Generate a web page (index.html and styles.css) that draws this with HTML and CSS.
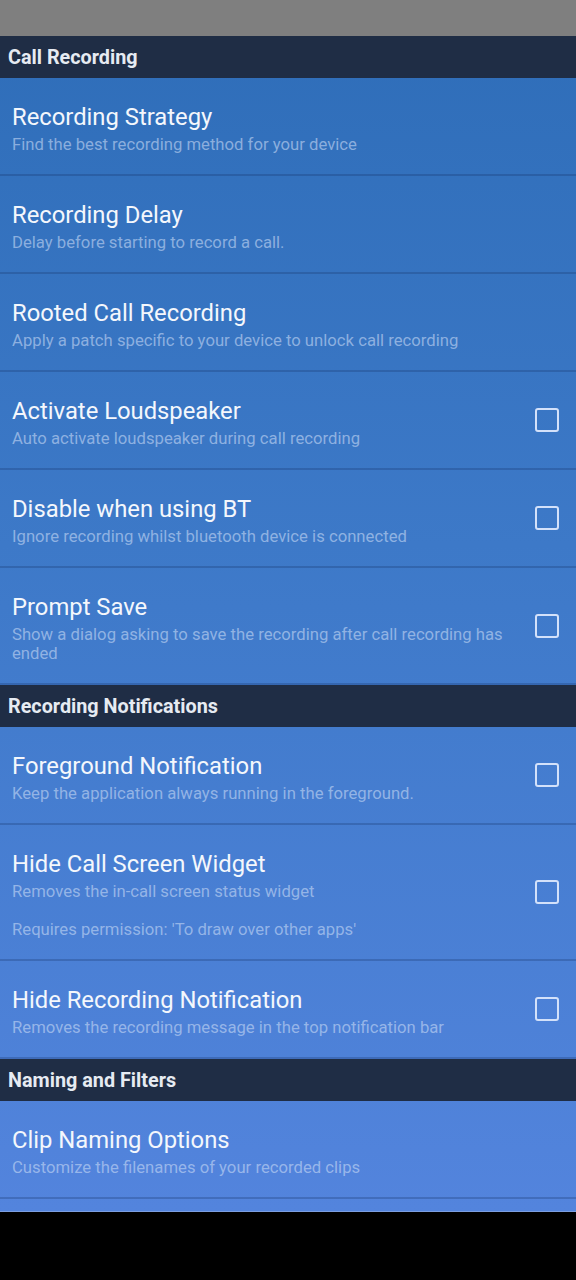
FILE: index.html
```html
<!DOCTYPE html>
<html>
<head>
<meta charset="utf-8">
<link rel="stylesheet" href="styles.css">
</head>
<body>
<div class="screen">
  <div class="statusbar"></div>
  <div class="list">
    <div class="section">Call Recording</div>
    <div class="item">
      <div class="text">
        <div class="title">Recording Strategy</div>
        <div class="sub">Find the best recording method for your device</div>
      </div>
    </div>
    <div class="item">
      <div class="text">
        <div class="title">Recording Delay</div>
        <div class="sub">Delay before starting to record a call.</div>
      </div>
    </div>
    <div class="item">
      <div class="text">
        <div class="title">Rooted Call Recording</div>
        <div class="sub">Apply a patch specific to your device to unlock call recording</div>
      </div>
    </div>
    <div class="item">
      <div class="text">
        <div class="title">Activate Loudspeaker</div>
        <div class="sub">Auto activate loudspeaker during call recording</div>
      </div>
      <div class="check"></div>
    </div>
    <div class="item">
      <div class="text">
        <div class="title">Disable when using BT</div>
        <div class="sub">Ignore recording whilst bluetooth device is connected</div>
      </div>
      <div class="check"></div>
    </div>
    <div class="item">
      <div class="text">
        <div class="title">Prompt Save</div>
        <div class="sub">Show a dialog asking to save the recording after call recording has ended</div>
      </div>
      <div class="check"></div>
    </div>
    <div class="section">Recording Notifications</div>
    <div class="item">
      <div class="text">
        <div class="title">Foreground Notification</div>
        <div class="sub">Keep the application always running in the foreground.</div>
      </div>
      <div class="check"></div>
    </div>
    <div class="item">
      <div class="text">
        <div class="title">Hide Call Screen Widget</div>
        <div class="sub">Removes the in-call screen status widget</div>
        <div class="sub sub-extra">Requires permission: 'To draw over other apps'</div>
      </div>
      <div class="check"></div>
    </div>
    <div class="item">
      <div class="text">
        <div class="title">Hide Recording Notification</div>
        <div class="sub">Removes the recording message in the top notification bar</div>
      </div>
      <div class="check"></div>
    </div>
    <div class="section">Naming and Filters</div>
    <div class="item">
      <div class="text">
        <div class="title">Clip Naming Options</div>
        <div class="sub">Customize the filenames of your recorded clips</div>
      </div>
    </div>
  </div>
</div>
</body>
</html>
```

FILE: styles.css
```css
html, body {
  margin: 0;
  padding: 0;
  background: #000;
}
body {
  width: 576px;
  height: 1280px;
  font-family: Roboto, "Noto Sans", "Liberation Sans", sans-serif;
}
.screen {
  width: 576px;
  height: 1212px;
  overflow: hidden;
  background: linear-gradient(180deg, #2e6db8 0%, #3d79c8 45%, #5384dd 100%);
  border-bottom: 1px solid #7c9ee0;
  box-sizing: border-box;
  display: flex;
  flex-direction: column;
}
.statusbar {
  height: 36px;
  flex: none;
  background: #7f7f7f;
}
.list {
  display: flex;
  flex-direction: column;
}
.section {
  height: 42px;
  flex: none;
  box-sizing: border-box;
  padding: 0 8px;
  background: #1f2d45;
  color: #e6ebf2;
  font-weight: 700;
  font-size: 19.8px;
  line-height: 43px;
}
.item {
  display: flex;
  align-items: center;
  gap: 16px;
  padding: 26px 17px 20px 12px;
  border-bottom: 2px solid rgba(20, 50, 105, 0.28);
  flex: none;
}
.item-tall {
  padding-bottom: 21px;
}
.text {
  flex: 1;
  display: flex;
  flex-direction: column;
  gap: 5px;
  min-width: 0;
}
.title {
  color: #f4f7fc;
  font-size: 23.8px;
  line-height: 26px;
}
.sub {
  color: rgba(200, 218, 245, 0.6);
  font-size: 16.7px;
  line-height: 19px;
}
.sub-extra {
  margin-top: 14px;
}
.check {
  flex: none;
  width: 20px;
  height: 20px;
  border: 2.5px solid #d3e1fa;
  border-radius: 3px;
  margin-top: -6px;
}
```
